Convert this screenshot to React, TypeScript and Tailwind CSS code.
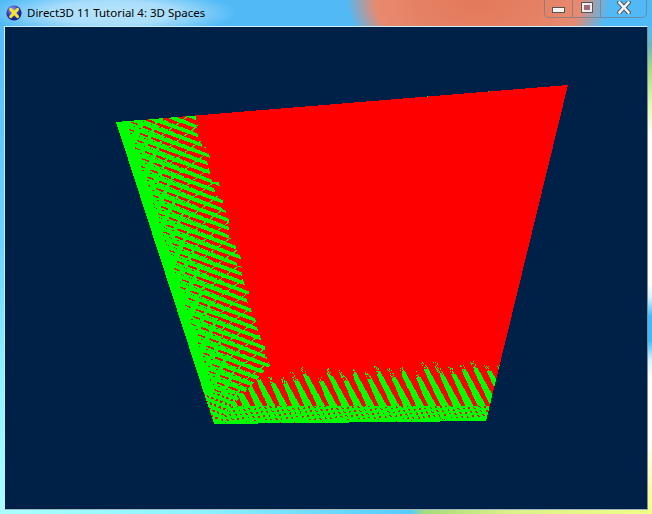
import React, { useMemo } from "react";

const P = [[116, 122], [568, 85], [486, 421], [214, 424]];
const side = (a: number[], b: number[], x: number, y: number) => (b[0] - a[0]) * (y - a[1]) - (b[1] - a[1]) * (x - a[0]);
const inside = (x: number, y: number) => {
  for (let i = 0; i < 4; i++) if (side(P[i], P[(i + 1) % 4], x, y) < 0) return false;
  return true;
};
const frac = (v: number) => v - Math.floor(v);
const hash = (x: number, y: number) => frac(Math.sin(x * 12.9898 + y * 78.233) * 43758.5453);

function isRed(x: number, y: number) {
  const leftBase = 116 + ((y - 122) * 98) / 302;
  const leftEnd = 195 + ((y - 115) * 76) / 257 + (hash(Math.floor(y / 7), 3) - 0.5) * 7;
  const bottomStart = 373 - ((x - 265) * 12) / 235 + (hash(Math.floor(x / 6), 9) - 0.5) * 10;
  const bottom = 424 - ((x - 214) * 3) / 272;
  const beyondDiag = y > 362 ? x > 272 - (y - 362) * 0.93 : x > 272;
  if (!beyondDiag) {
    if (x >= leftEnd) return true;
    const t = (x - leftBase) / (leftEnd - leftBase);
    if (y > 392) {
      const fade = bottom - y;
      if (fade < 5) return false;
      const a = frac((y - 0.4 * x) / 6);
      const b = frac((x + y * 0.3) / 5);
      return a < 0.35 && b < 0.5;
    }
    if (t < 0.13) return false;
    const main = frac((y - 0.36 * x) / 8.2);
    const duty = 0.08 + 0.5 * t;
    if (main < duty) {
      if (t < 0.5) return frac(x / 13 + y / 31) < 0.32 + t * 1.1;
      return frac(x / 23 + y / 17) < 0.92;
    }
    const second = frac((y - 0.36 * x) / 8.2 + 0.55);
    return second < 0.07 && frac(x / 9 + y / 23) < 0.38;
  }
  if (y >= bottomStart) {
    const t = (y - bottomStart) / (bottom - bottomStart);
    if (bottom - y < 3.5) return hash(x, y) < 0.012;
    if (y > 405) {
      const q = frac((x - y * 0.5) / 5.5) < 0.36 && frac((y + x * 0.1) / 4.2) < 0.5;
      return q && hash(x, y) < 0.85;
    }
    const s = frac((x - y / 1.8) / 12.4);
    const duty = 0.68 - 0.34 * Math.min(1, t / 0.7);
    const inStripe = s < duty;
    if (t < 0.14) return inStripe || hash(x, y) < 0.75 - t * 2;
    return inStripe;
  }
  return true;
}

function Quad() {
  const d = useMemo(() => {
    let out = "";
    for (let y = 85; y < 425; y++) {
      let start = -1;
      for (let x = 110; x <= 570; x++) {
        const on = inside(x + 0.5, y + 0.5) && isRed(x, y);
        if (on && start < 0) start = x;
        if (!on && start >= 0) {
          out += `M${start} ${y}h${x - start}v1h${start - x}z`;
          start = -1;
        }
      }
    }
    return out;
  }, []);
  return (
    <svg className="absolute left-[-5px] top-[-27px]" width={652} height={514} shapeRendering="crispEdges">
      <polygon points={P.map((p) => p.join(",")).join(" ")} fill="#00ff00" />
      <path d={d} fill="#ff0000" />
    </svg>
  );
}

function AppIcon() {
  return (
    <svg width={16} height={16} viewBox="0 0 16 16" className="shrink-0">
      <defs>
        <radialGradient id="g" cx="40%" cy="30%" r="80%">
          <stop offset="0%" stopColor="#a0a4f0" />
          <stop offset="55%" stopColor="#2a2fb0" />
          <stop offset="100%" stopColor="#10125e" />
        </radialGradient>
      </defs>
      <circle cx="8" cy="8" r="7.6" fill="url(#g)" />
      <path d="M4.8 4.5 L11.5 11.5 M11.5 4.5 L4.8 11.5" stroke="#f5e430" strokeWidth="3.2" strokeLinecap="round" />
    </svg>
  );
}

export default function App() {
  return (
    <div className="flex h-[514px] w-[652px] flex-col overflow-hidden">
      <div className="flex h-[26px] shrink-0 items-start bg-[radial-gradient(ellipse_125px_24px_at_112px_13px,#b8e5fc_0%,#a8ddfb_50%,#4db8f700_100%),radial-gradient(ellipse_132px_78px_at_478px_0px,#e4785a_0%,#e58264_50%,#e88a70_78%,#e88a7000_100%),linear-gradient(90deg,#50b9f6_0%,#50b9f6_100%)]">
        <div className="flex items-center gap-[5px] pl-[6px] pt-[5px]">
          <AppIcon />
          <span className="whitespace-nowrap font-['Noto_Sans',sans-serif] text-[11.5px] leading-[16px] text-black">Direct3D 11 Tutorial 4: 3D Spaces</span>
        </div>
        <div className="ml-auto mr-[5px] flex h-[18px] w-[103px] rounded-b-[5px] border border-t-0 border-[#6f7a86]/70">
          <div className="flex w-[28px] items-center justify-center border-r border-[#6f7a86]/70">
            <div className="mt-[3px] h-[6px] w-[13px] border border-[#555] bg-[#f4f4f4]" />
          </div>
          <div className="flex w-[28px] items-center justify-center border-r border-[#6f7a86]/70">
            <div className="mb-[2px] h-[11px] w-[12px] border border-[#555] bg-[#eeeeee] p-[2px]">
              <div className="h-full w-full bg-[#a06a78]" />
            </div>
          </div>
          <div className="flex flex-1 items-center justify-center">
            <svg width={14} height={13} viewBox="0 0 14 13" className="mb-[2px]">
              <path d="M2.5 1.5 L11.5 11.5 M11.5 1.5 L2.5 11.5" stroke="#4a4f58" strokeWidth="4.4" strokeLinecap="square" />
              <path d="M2.5 1.5 L11.5 11.5 M11.5 1.5 L2.5 11.5" stroke="#f2f2f2" strokeWidth="2.6" strokeLinecap="square" />
            </svg>
          </div>
        </div>
      </div>
      <div className="flex min-h-0 flex-1">
        <div className="w-[4px] shrink-0 bg-[linear-gradient(180deg,#55bbfa_0%,#6ad2ff_45%,#8cf2ff_72%,#a8ffff_100%)]" />
        <div className="relative flex-1 overflow-hidden border border-[#cfeefb] border-r-[#7f9096] border-b-[#9fb6bc] bg-[#002147]">
          <Quad />
        </div>
        <div className="w-[4px] shrink-0 bg-[linear-gradient(180deg,#55bbf5_0%,#6db8c0_4%,#a8dc80_9%,#e0f8b0_16%,#ffffff_23%,#ffffff_53%,#d8f2ff_56%,#40bbf8_60%,#40bbf8_65%,#d8f2ff_69%,#ffffff_73%,#ffffff_85%,#f8fca8_96%,#f4ff88_100%)]" />
      </div>
      <div className="h-[4px] shrink-0 bg-[linear-gradient(90deg,#a8ffff_0%,#8df4ff_30%,#62d4ff_55%,#55ccff_63%,#a5dc7a_65%,#dcf08a_78%,#f0ff88_100%)]" />
    </div>
  );
}
